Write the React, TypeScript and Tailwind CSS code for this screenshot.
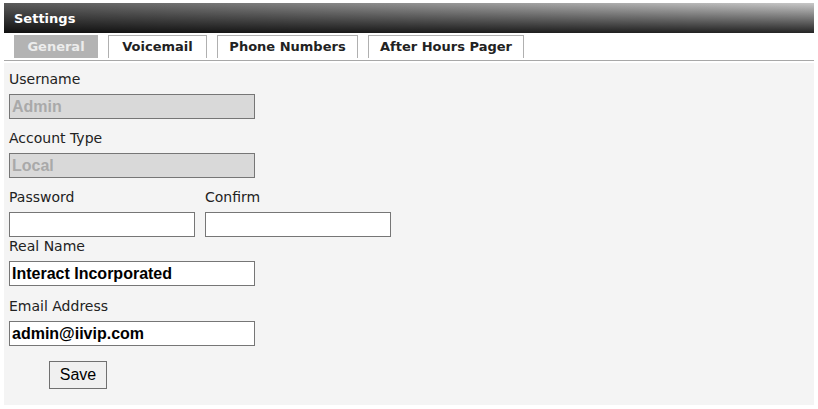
import React from "react";

const verdana = "font-['DejaVu_Sans',Verdana,sans-serif]";
const arial = "font-['Liberation_Sans',Arial,sans-serif]";

function Label({ children }: { children: React.ReactNode }) {
  return (
    <div className={`${verdana} text-[14px] leading-[16px] text-[#222] h-[16px] whitespace-nowrap`}>{children}</div>
  );
}

function Field({
  value,
  disabled,
  width = 246,
}: {
  value?: string;
  disabled?: boolean;
  width?: number;
}) {
  return (
    <input
      readOnly
      value={value ?? ""}
      className={`${arial} mt-[7px] block h-[25px] border border-[#767676] px-[2px] text-[16px] font-bold outline-none ${
        disabled ? "bg-[#d9d9d9] text-[#a9a9a9]" : "bg-white text-black"
      }`}
      style={{ width }}
    />
  );
}

export default function App() {
  const tabs = [
    { name: "General", active: true, w: "w-[84px]" },
    { name: "Voicemail", w: "w-[99px]" },
    { name: "Phone Numbers", w: "w-[141px]" },
    { name: "After Hours Pager", w: "w-[156px]" },
  ];
  return (
    <div className="w-[818px] h-[409px] bg-white pt-[3px] px-[4px] overflow-hidden">
      <div className="w-[810px]">
        <div className="h-[30px] bg-[linear-gradient(to_bottom,rgba(0,0,0,0)_0%,rgba(0,0,0,0.82)_100%),linear-gradient(to_right,#5a5a5a,#c8c8c8)] flex items-center pl-[10px]">
          <span className={`${verdana} text-white font-bold text-[13px] leading-none`}>Settings</span>
        </div>
        <div className="flex gap-[10px] pl-[10px] pt-[2px] h-[27px]">
          {tabs.map((t) =>
            t.active ? (
              <div
                key={t.name}
                className={`${t.w} h-[23px] bg-[#b3b3b3] flex items-center justify-center ${verdana} font-bold text-[13px] text-[#ececec]`}
              >
                {t.name}
              </div>
            ) : (
              <div
                key={t.name}
                className={`${t.w} h-[23px] bg-white border border-b-0 border-[#b0b0b0] flex items-center justify-center ${verdana} font-bold text-[13px] text-[#222]`}
              >
                {t.name}
              </div>
            )
          )}
        </div>
        <div className="h-[1px] bg-[#a8a8a8] mb-[2px]" />
        <div className="h-[342px] bg-[#f4f4f4] pl-[5px] pt-[8px]">
          <Label>Username</Label>
          <Field value="Admin" disabled />
          <div className="h-[11px]" />
          <Label>Account Type</Label>
          <Field value="Local" disabled />
          <div className="h-[11px]" />
          <div className="flex gap-[10px]">
            <div>
              <Label>Password</Label>
              <Field width={186} />
            </div>
            <div>
              <Label>Confirm</Label>
              <Field width={186} />
            </div>
          </div>
          <div className="h-[1px]" />
          <Label>Real Name</Label>
          <Field value="Interact Incorporated" />
          <div className="h-[12px]" />
          <Label>Email Address</Label>
          <Field value="admin@iivip.com" />
          <div className="h-[15px]" />
          <button
            className={`${arial} ml-[40px] block w-[58px] h-[28px] bg-[#f0f0f0] border border-[#707070] text-[16px] text-black`}
          >
            Save
          </button>
        </div>
      </div>
    </div>
  );
}
